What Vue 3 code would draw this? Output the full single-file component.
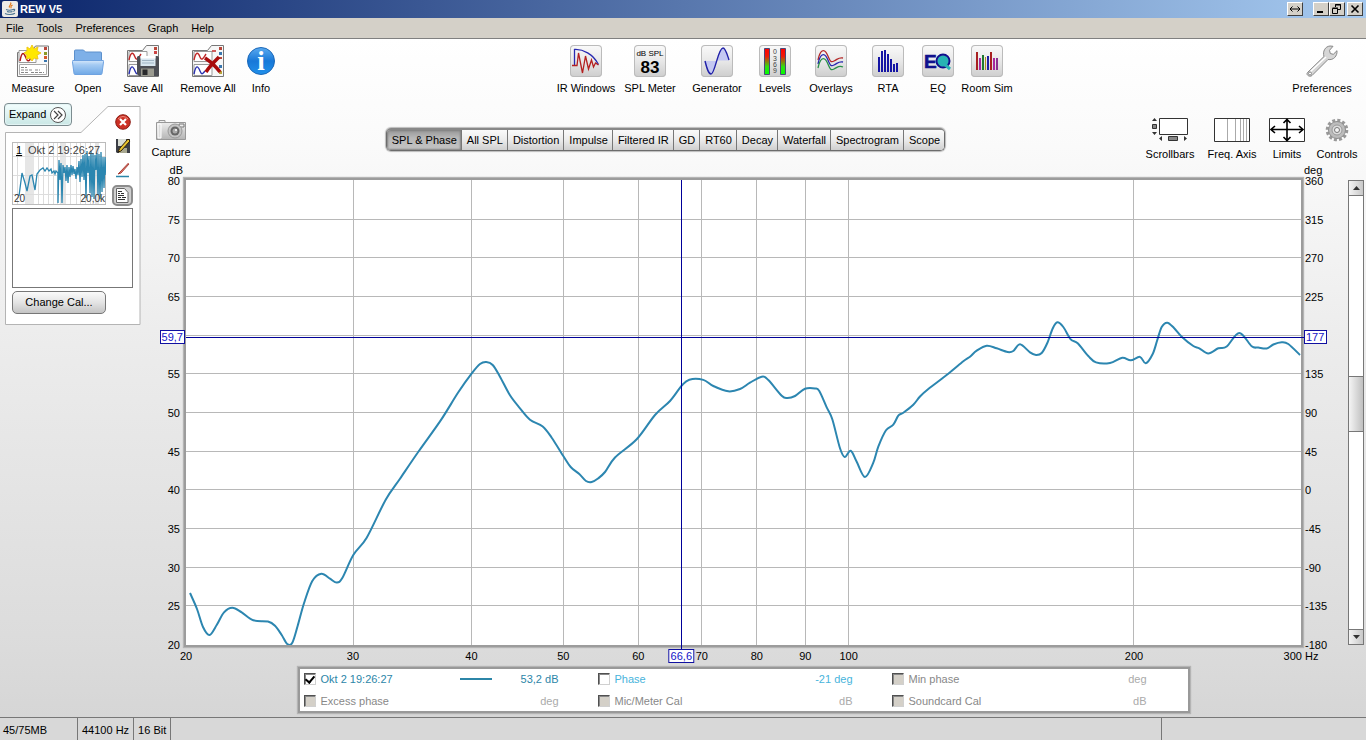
<script setup>
import { ref } from 'vue'

const menus = ['File', 'Tools', 'Preferences', 'Graph', 'Help']
const tabs = ['SPL & Phase', 'All SPL', 'Distortion', 'Impulse', 'Filtered IR', 'GD', 'RT60', 'Decay', 'Waterfall', 'Spectrogram', 'Scope']
const activeTab = ref('SPL & Phase')
const notes = ref('')

const dbTicks = [80, 75, 70, 65, 60, 55, 50, 45, 40, 35, 30, 25, 20]
const degTicks = [360, 315, 270, 225, 180, 135, 90, 45, 0, -45, -90, -135, -180]
const freqTicks = [20, 30, 40, 50, 60, 70, 80, 90, 100, 200, 300]

const plot = { x: 186, y: 180, w: 1115, h: 465 }
const freqShare = (f) => Math.log(f / 20) / Math.log(15)
const dbShare = (d) => (80 - d) / 60
const fx = (f) => plot.x + 0.5 + freqShare(f) * (plot.w - 1)
const dy = (d) => plot.y + 0.5 + dbShare(d) * (plot.h - 1)
const cursor = { freq: 66.6, db: 59.7 }

const response = [
  [190, 593], [197, 609], [203, 627], [209.5, 635], [216.7, 625], [224, 612.3], [232.3, 607.7], [241.7, 612.3],
  [253.3, 620.3], [268, 621.5], [275, 625.7], [281.7, 635], [287.3, 644], [292.3, 642.7], [297.7, 625.7], [304, 603.3],
  [312.3, 581], [321.3, 573.7], [330, 578.7], [336.7, 582.5], [342.3, 578], [353.3, 555], [366.7, 537.7],
  [385.7, 499.7], [400, 478.7], [418.7, 451.3], [440.7, 420.4], [458.3, 392.3], [472.3, 372.7], [480, 364],
  [486.3, 362], [492.7, 365], [500, 376.7], [510, 395.3], [520, 408.3], [530, 419.7], [542.7, 426.5], [551.7, 437.7],
  [563.3, 456], [570.7, 467], [579.3, 474], [586, 481], [591.7, 482], [598, 478.5], [605, 472], [615, 457.5],
  [636.7, 439.3], [655, 415], [670, 401], [681.7, 385.7], [689.3, 379.7], [703.3, 379.9], [713.3, 386],
  [728.3, 391.3], [740, 389], [750, 382.7], [761.7, 376.7], [768.3, 380], [781.7, 395.7], [787.3, 398], [795, 396],
  [805, 388.7], [815, 388.4], [819.3, 391], [826.7, 407.3], [832.3, 419.3], [840, 448.3], [844.7, 457],
  [850.7, 450.7], [856.7, 461.7], [865, 477], [873.3, 462.7], [878.3, 446.7], [886, 430.3], [893.3, 424.7],
  [898.3, 415.7], [903.3, 412.7], [913.3, 404.7], [920, 396.5], [928.3, 389], [948.3, 373.7], [963.3, 361.3],
  [970, 356.7], [976.7, 350.7], [986.7, 345.7], [996.7, 348.3], [1007.7, 352], [1013.3, 351], [1020, 344.3],
  [1030, 352.3], [1036, 355], [1041.7, 353], [1047.3, 343], [1052.7, 328.5], [1057.3, 322.3], [1063.3, 327],
  [1070.7, 339.3], [1077.7, 343.3], [1088.3, 356], [1096, 362.4], [1110, 363], [1122.3, 357.7], [1130.7, 360.3],
  [1140, 356.9], [1145.7, 363.3], [1152.7, 354], [1157.3, 340], [1161.7, 327], [1167.3, 322.7], [1174, 328],
  [1181.7, 336.7], [1193.3, 346], [1199.3, 348.3], [1208.3, 353.5], [1218.3, 348.3], [1226.7, 346.5],
  [1239.3, 333], [1251.7, 346.3], [1258.3, 347.5], [1266.7, 348.5], [1273.3, 344.5], [1281.7, 342.3],
  [1288.3, 344], [1300, 355]
]

function smooth(p) {
  let d = `M${p[0][0]} ${p[0][1]}`
  for (let i = 0; i < p.length - 1; i++) {
    const a = p[i - 1] || p[i]
    const b = p[i]
    const c = p[i + 1]
    const e = p[i + 2] || c
    d += `C${b[0] + (c[0] - a[0]) / 6} ${b[1] + (c[1] - a[1]) / 6} ${c[0] - (e[0] - b[0]) / 6} ${c[1] - (e[1] - b[1]) / 6} ${c[0]} ${c[1]}`
  }
  return d
}
const curve = smooth(response)

const traces = ref([
  { id: 'spl', name: 'Okt 2 19:26:27', value: '53,2 dB', on: true, enabled: true, line: true, tone: 'teal' },
  { id: 'phase', name: 'Phase', value: '-21 deg', on: false, enabled: true, line: false, tone: 'sky' },
  { id: 'min', name: 'Min phase', value: 'deg', on: false, enabled: false, line: false, tone: 'off' },
  { id: 'excess', name: 'Excess phase', value: 'deg', on: false, enabled: false, line: false, tone: 'off' },
  { id: 'mic', name: 'Mic/Meter Cal', value: 'dB', on: false, enabled: false, line: false, tone: 'off' },
  { id: 'card', name: 'Soundcard Cal', value: 'dB', on: false, enabled: false, line: false, tone: 'off' }
])
</script>

<template>
  <div class="app">
    <header class="titlebar">
      <svg class="java" width="16" height="16" viewBox="0 0 16 16">
        <rect width="16" height="16" rx="2" fill="#eceae6" />
        <path d="M8.500 1.500c2 2-2.500 3-1 5.200M10.500 4c-2 1.200-2 1.800-1.200 3.200" fill="none" stroke="#e07a1c" stroke-width="1.200" />
        <path d="M4 8.500c2 .8 5 .8 7 0M5 10.500c2 .7 3.500.7 5.500 0M3 12.500c2.500 1.300 7.500 1.300 10-.3M11 8.500c2-.7 2.500 1 .3 2" fill="none" stroke="#4a7492" stroke-width="1.100" />
      </svg>
      <span class="title">REW V5</span>
      <button class="win" aria-label="Move"><svg width="12" height="10" viewBox="0 0 12 10"><path d="M1 5h10M3.500 2.500 1 5l2.500 2.500M8.500 2.500 11 5 8.500 7.500" fill="none" stroke="#000" /></svg></button>
      <span class="wins">
        <button class="win" aria-label="Minimize"><svg width="10" height="10" viewBox="0 0 10 10"><path d="M1 8h6" stroke="#000" stroke-width="2" /></svg></button>
        <button class="win" aria-label="Restore"><svg width="10" height="10" viewBox="0 0 10 10"><path d="M3.500 3V.5h5v5H6M3 1h6M.5 4.500h5v5h-5zM.5 4h5.500" fill="none" stroke="#000" /></svg></button>
      </span>
      <button class="win" aria-label="Close"><svg width="10" height="10" viewBox="0 0 10 10"><path d="m1.500 1.500 7 7m0-7-7 7" stroke="#000" stroke-width="1.600" /></svg></button>
    </header>

    <nav class="menubar">
      <button v-for="m in menus" :key="m">{{ m }}</button>
    </nav>

    <div class="content">
      <div class="toolbar">
        <div class="group files">
          <button class="tool">
            <svg width="32" height="32" viewBox="0 0 32 32">
              <path d="M.5 7.500h13l5-6.500h13v30.500H.5z" fill="#fafafa" stroke="#777" />
              <path d="M2 5.500h17v12H2z" fill="#fff" stroke="#999" />
              <path d="M3 16c2-11 4-8 6-3s4 3 6-3 2-1 4 0" fill="none" stroke="#b01818" stroke-width="1.500" />
              <path d="m10 2 3 2 2-4 2 4 4-2-1 4 4 2-4 2 1 4-4-1-2 3-2-3-4 1 1-4-3-2 3-2z" fill="#ffe800" stroke="#f0c818" />
              <path d="M27 2h3v3h-3z" fill="#b8473a" /><path d="M27 7h3v3h-3z" fill="#8b9a25" /><path d="M27 11h3v3h-3z" fill="#d45a2a" /><path d="M27 15h3v2h-3z" fill="#3976ae" />
              <path d="M2.500 19.500h27v10h-27z" fill="#fff" stroke="#aaa" />
              <path d="M4 22.500h6M4 25h12m2 0h5M4 27.500h8m2 0h13" stroke="#888" stroke-dasharray="3 1" />
            </svg>
            <span>Measure</span>
          </button>
          <button class="tool">
            <svg width="32" height="32" viewBox="0 0 32 32">
              <defs><linearGradient id="folder" x2="0" y2="1"><stop stop-color="#d4e6fa" /><stop offset=".3" stop-color="#a5cbf3" /><stop offset="1" stop-color="#6fa8e6" /></linearGradient></defs>
              <path d="M2.500 17V6q0-1 1-1h8l2 2h15q1 0 1 1v9z" fill="#7eb0e8" stroke="#5c90cc" />
              <path d="M.8 15.500h30.400q.5 0 .4.800L30 28.500q-.2 1-1 1H3q-.8 0-1-1L.4 16.500q0-1 .4-1z" fill="url(#folder)" stroke="#6ea2e0" />
            </svg>
            <span>Open</span>
          </button>
          <button class="tool">
            <svg width="32" height="32" viewBox="0 0 32 32">
              <path d="M.5 5.500h15l4-5h12v31H.5z" fill="#f7f7f7" stroke="#777" />
              <path d="M2 6.500h18v10H2zM2 19.500h18v11H2z" fill="#fff" stroke="#999" />
              <path d="M2 15c2-9 4-8 6-3s4 0 6-3" fill="none" stroke="#c02828" stroke-width="1.400" />
              <path d="M2 29c2-10 4-8 6-3s3 2 5 0" fill="none" stroke="#2830b0" stroke-width="1.400" />
              <path d="M27 2h3v3h-3z" fill="#b8473a" /><path d="M27 6h3v3h-3z" fill="#c44" />
              <path d="M11 11h19.500l1.500 1.500V31H12l-2-2V12z" fill="#4c4e55" />
              <path d="M13.500 11h15v10h-15z" fill="#d8e6f0" /><path d="M13.500 11h15v2.500h-15z" fill="#fff" /><path d="M15 15.500h12M15 18h12" stroke="#a0b4c4" />
              <path d="M14 23.500h13V31H14z" fill="#9a9a90" /><path d="M15.500 24.500h5V30h-5z" fill="#28292c" />
            </svg>
            <span>Save All</span>
          </button>
          <button class="tool">
            <svg width="32" height="32" viewBox="0 0 32 32">
              <path d="M.5 5.500h15l4-5h12v31H.5z" fill="#f7f7f7" stroke="#777" />
              <path d="M2 6.500h18v10H2zM2 19.500h18v11H2z" fill="#fff" stroke="#999" />
              <path d="M2 15c2-9 4-8 6-3s4 0 6-3M20 6h4" fill="none" stroke="#c02828" stroke-width="1.400" />
              <path d="M2 29c2-10 4-8 6-3s3 2 5 0" fill="none" stroke="#2830b0" stroke-width="1.400" />
              <path d="M27 2h3v3h-3zM27 12h3v2h-3z" fill="#b8473a" /><path d="M27 7h3v3h-3zM27 20h3v3h-3z" fill="#3976ae" /><path d="M27 26h3v3h-3z" fill="#b8a43a" />
              <path d="M13 13c6 4 12 10 15 14M27 12c-5 5-10 10-13 15" fill="none" stroke="#a80c0c" stroke-width="3.500" />
            </svg>
            <span>Remove All</span>
          </button>
          <button class="tool">
            <svg width="28" height="32" viewBox="0 0 28 32">
              <defs><linearGradient id="info" x2="0" y2="1"><stop stop-color="#5aaaf0" /><stop offset=".5" stop-color="#1878d8" /><stop offset="1" stop-color="#2090ea" /></linearGradient></defs>
              <circle cx="14" cy="16" r="13.500" fill="url(#info)" stroke="#1c68b8" />
              <text class="serif" x="14" y="25" text-anchor="middle" font-size="27" font-weight="bold" fill="#fff">i</text>
            </svg>
            <span>Info</span>
          </button>
        </div>

        <div class="group views">
          <button class="tool">
            <svg class="tile" width="32" height="32" viewBox="0 0 32 32">
              <path d="M4.500 21V4.500C13 4 23 9 28.500 19.500" fill="none" stroke="#2828b0" stroke-width="1.300" />
              <path d="M2 20.500h5L8.500 8l4 20 3-17 3 13 3-9 2 7 2-4 3 2" fill="none" stroke="#b42020" stroke-width="1.300" />
            </svg>
            <span>IR Windows</span>
          </button>
          <button class="tool">
            <svg class="tile" width="32" height="32" viewBox="0 0 32 32">
              <text x="16" y="11" text-anchor="middle" font-size="8">dB SPL</text>
              <text x="16" y="28" text-anchor="middle" font-size="17" font-weight="bold">83</text>
            </svg>
            <span>SPL Meter</span>
          </button>
          <button class="tool">
            <svg class="tile" width="32" height="32" viewBox="0 0 32 32">
              <path d="M4 16h12c-3 9-4 13-6.500 13S6 23 4 16zM16 15.500c2-8 3-12 5.500-12S26 10 28 15.500z" fill="#c4c8f2" />
              <path d="M4 16c2 8 3.500 13 6 13C14 29 17 3 22 3c2.500 0 4 6 6 12" fill="none" stroke="#2020a8" stroke-width="1.400" />
            </svg>
            <span>Generator</span>
          </button>
          <button class="tool">
            <svg class="tile" width="32" height="32" viewBox="0 0 32 32">
              <defs><linearGradient id="level" x2="0" y2="1"><stop stop-color="#f00" /><stop offset=".3" stop-color="#f01808" /><stop offset=".7" stop-color="#30e010" /><stop offset="1" stop-color="#0f0" /></linearGradient></defs>
              <path d="M5.500 3.500h5v26h-5zM21.500 3.500h5v26h-5z" fill="url(#level)" stroke="#484878" />
              <g font-size="7" text-anchor="middle" fill="#444"><text x="16" y="9">0</text><text x="16" y="16">3</text><text x="16" y="22">6</text><text x="16" y="28">9</text></g>
            </svg>
            <span>Levels</span>
          </button>
          <button class="tool">
            <svg class="tile" width="32" height="32" viewBox="0 0 32 32">
              <g fill="none" stroke-width="1.300">
                <path d="M3 15C5 5 9 3 12 9s3 9 7 7 5-4 9-3" stroke="#b42828" />
                <path d="M3 19C5 9 9 7 12 13s3 9 7 7 5-4 9-3" stroke="#2828b0" />
                <path d="M3 23c2-10 6-12 9-6s3 9 7 7 5-4 9-2" stroke="#289048" />
              </g>
            </svg>
            <span>Overlays</span>
          </button>
          <button class="tool">
            <svg class="tile" width="32" height="32" viewBox="0 0 32 32">
              <path d="M6 12h2v15H6zM9 6h2v21H9zM12 5h2v22h-2zM15 9h2v18h-2zM18 14h2v13h-2zM21 19h2v8h-2zM24 18h2v9h-2z" fill="#1414a4" />
            </svg>
            <span>RTA</span>
          </button>
          <button class="tool">
            <svg class="tile" width="32" height="32" viewBox="0 0 32 32">
              <circle cx="21" cy="16" r="6" fill="#28b4b4" />
              <text x="2" y="23" font-size="19" font-weight="bold" fill="#10108c" stroke="#10108c" stroke-width=".6">E</text>
              <circle cx="21" cy="16" r="6.500" fill="none" stroke="#10108c" stroke-width="2" />
              <path d="m21 18 7 6" stroke="#28b4b4" stroke-width="3" />
            </svg>
            <span>EQ</span>
          </button>
          <button class="tool">
            <svg class="tile" width="32" height="32" viewBox="0 0 32 32">
              <path d="M5 7h2v18H5zM19 7h2v18h-2z" fill="#a82020" /><path d="M8 13h2v12H8zM22 13h2v12h-2z" fill="#a828a0" />
              <path d="M11 10h2v15h-2z" fill="#207830" /><path d="M14 12h1v13h-1z" fill="#b09020" /><path d="M16 11h2v14h-2z" fill="#2020a0" /><path d="M25 13h2v12h-2z" fill="#8c3090" />
            </svg>
            <span>Room Sim</span>
          </button>
        </div>

        <div class="group prefs">
          <button class="tool">
            <svg width="32" height="32" viewBox="0 0 32 32">
              <path d="M1.500 27.500 18 11.500C16.500 6.500 19 1.500 24 1l3 .3-3.500 4 .8 3.200 3 .8 3.700-3.600C31.500 11 27.500 15.500 22 14.500L6 30.500c-2 2-6.500-.5-4.500-3z" fill="#d6d6d6" stroke="#888" />
              <path d="M4.500 26.500 20 12" stroke="#fff" stroke-width="1.500" />
              <circle cx="4" cy="28.500" r="1.500" fill="#fff" stroke="#888" />
            </svg>
            <span>Preferences</span>
          </button>
        </div>
      </div>

      <div class="body">
        <aside class="side">
          <svg class="card" viewBox="0 0 136 219">
            <path d="M.5 218.500V26.500H76L103 .5h32v218z" fill="#fff" stroke="#b4b4b4" />
          </svg>
          <button class="expand">Expand
            <svg width="18" height="18" viewBox="0 0 18 18"><circle cx="9" cy="9" r="7.500" fill="#fff" stroke="#555" /><path d="m5 5 4 4-4 4m4-8 4 4-4 4" fill="none" stroke="#444" stroke-width="1.200" /></svg>
          </button>
          <div class="sheet">
            <svg class="thumb" viewBox="0 0 94 63" role="img" aria-label="Measurement 1, Okt 2 19:26:27">
              <rect x=".5" y=".5" width="93" height="62" fill="#fff" stroke="#bbb" />
              <path d="M13 1h9v61h-9zM48 1h6v61h-6zM83 1h4v61h-4z" fill="#e6e6e6" />
              <path d="M1 14.500h92M1 33.500h92M1 52.500h92M5.500 1v61M26.500 1v61M31.500 1v61M36.500 1v61M41.500 1v61M45.500 1v61M58.500 1v61M64.500 1v61M68.500 1v61M73.500 1v61M78.500 1v61" stroke="#ddd" />
              <path d="M7 54l3-23 3 10 2 8 3-15 2-1 3 15 2-16 3-4 3-2 2 3 2-3 2 3 2-2 1 4 2-2 1 3 1-3 2 2V61l1-43 1 20 1-17 1 40 1-38 1 8 1-6 1 14 1-16 1 18 1-16 1 10 1-12 1 10 1-9 1 8 1-5 1 10 1-12 1 8 1-14 1 21 1-23 1 18 1-22 1 25 1-26 1 44 1-47 1 22 1-17 1 37 1-42 1 46 1-44 1 46 1-44 1 15 1-17 1 42 1-41 1 45 1-47 1 40 1-35 1 31 1-31 1 18 1-10 1 26 1-27 1 18 1-12 1 22 1 10" fill="none" stroke="#2b86b0" stroke-width="1.300" />
              <text x="4" y="12" font-size="11" text-decoration="underline">1</text>
              <text x="16" y="12" font-size="11" fill="#444">Okt 2 19:26:27</text>
              <text x="2" y="60" font-size="10" fill="#333">20</text>
              <text x="93" y="60" font-size="10" fill="#333" text-anchor="end">20,0k</text>
            </svg>
            <textarea v-model="notes" aria-label="Notes"></textarea>
            <button class="cal">Change Cal...</button>
          </div>
          <div class="actions">
            <button aria-label="Remove measurement"><svg width="16" height="16" viewBox="0 0 16 16"><circle cx="8" cy="8" r="7.300" fill="#cc3024" stroke="#8c1c14" /><path d="M3 5q5-5 10 0" stroke="#ec8c80" fill="none" /><path d="m5 5 6 6m0-6-6 6" stroke="#fff" stroke-width="2.200" /></svg></button>
            <button aria-label="Save measurement"><svg width="16" height="16" viewBox="0 0 16 16"><path d="M1 1h14v14H2l-1-1z" fill="#3c3f46" /><path d="M3 1h8v7H3z" fill="#d8dcd4" /><path d="M4 10h8v5H4z" fill="#a8a890" /><path d="M13 1 5 10l-2 4 3-1 9-10z" fill="#e8c430" stroke="#302008" /></svg></button>
            <button aria-label="Trace colour"><svg width="16" height="16" viewBox="0 0 16 16"><path d="M13.500 1 5 10l-2 2 3-1 8-9" fill="#e88070" stroke="#a84038" /><path d="M1 14.500h13" stroke="#2b86a8" stroke-width="1.500" /></svg></button>
            <button class="notes" aria-label="Show notes"><svg width="13" height="15" viewBox="0 0 13 15"><path d="M.5.5h8l3.500 4v10H.5z" fill="#fff" stroke="#666" /><path d="M2 3.500h4M2 5.500h2m1 0h3M2 7.500h6M2 9.500h3m1 0h4M2 11.500h7" stroke="#333" /></svg></button>
          </div>
        </aside>

        <main class="main">
          <div class="viewbar">
            <button class="tool capture">
              <svg width="30" height="22" viewBox="0 0 30 22">
                <defs><linearGradient id="cam" x2="0" y2="1"><stop stop-color="#f4f4f4" /><stop offset="1" stop-color="#b4b4b4" /></linearGradient></defs>
                <path d="M3 3V1.500h6V3M.5 3.500h29v17H.5z" fill="url(#cam)" stroke="#999" />
                <path d="M2 5h3v14H2z" fill="#ddd" stroke="#fff" /><path d="M23 5h5v3h-5z" fill="#eee" stroke="#777" />
                <circle cx="19" cy="12" r="7" fill="#c4c4c4" stroke="#999" /><circle cx="19" cy="12" r="4.500" fill="#666" /><circle cx="19" cy="12" r="2.500" fill="#aaa" /><circle cx="20" cy="11" r="1" fill="#fff" />
              </svg>
              <span>Capture</span>
            </button>
            <div class="tabs" role="tablist">
              <button v-for="t in tabs" :key="t" role="tab" :aria-selected="t === activeTab" :class="{ on: t === activeTab }" @click="activeTab = t">{{ t }}</button>
            </div>
            <div class="group axes">
              <button class="tool">
                <svg width="38" height="26" viewBox="0 0 38 26">
                  <path d="M8.500 1.500h28v16h-28z" fill="#fff" stroke="#333" /><path d="M1.500 7.500h4v4h-4zM17.500 19.500h9v4h-9z" fill="#888" stroke="#333" />
                  <path d="M1 4h5L3.500 1zM1 15h5l-2.500 3zM11 19v5l-3-2.500zM33 19v5l3-2.500z" fill="#333" />
                </svg>
                <span>Scrollbars</span>
              </button>
              <button class="tool">
                <svg width="38" height="26" viewBox="0 0 38 26"><path d="M1.500 1.500h35v23h-35z" fill="#fff" stroke="#333" /><path d="M14.500 2v22M22.500 2v22M27.500 2v22M30.500 2v22M33.500 2v22" stroke="#aaa" /></svg>
                <span>Freq. Axis</span>
              </button>
              <button class="tool">
                <svg width="38" height="26" viewBox="0 0 38 26"><path d="M1.500 1.500h35v23h-35z" fill="#fff" stroke="#333" /><path d="M3 12.500h32M19 3v20M7 9l-4 3.500L7 16M31 9l4 3.500-4 3.500M15.500 6 19 2.500 22.500 6M15.500 20l3.500 3.500 3.500-3.500" fill="none" stroke="#000" stroke-width="1.600" /></svg>
                <span>Limits</span>
              </button>
              <button class="tool">
                <svg width="26" height="26" viewBox="0 0 26 26">
                  <circle cx="13" cy="13" r="9.800" fill="none" stroke="#999" stroke-width="3" stroke-dasharray="3 2.130" />
                  <circle cx="13" cy="13" r="8.500" fill="#bcbcbc" stroke="#8c8c8c" /><circle cx="13" cy="13" r="5" fill="#ddd" stroke="#999" /><circle cx="13" cy="13" r="2.500" fill="#f4f4f4" stroke="#777" />
                </svg>
                <span>Controls</span>
              </button>
            </div>
          </div>

          <div class="chart">
            <span class="unit left">dB</span>
            <span class="unit right">deg</span>
            <div class="yaxis left">
              <span v-for="d in dbTicks" :key="d" :class="{ hidden: d === 60 }">{{ d }}</span>
            </div>
            <div class="plot">
              <svg class="canvas" viewBox="186 180 1115 465" preserveAspectRatio="none" role="img" aria-label="SPL against frequency">
                <g class="grid">
                  <line v-for="d in dbTicks.slice(1, -1)" :key="d" x1="186" x2="1301" :y1="dy(d)" :y2="dy(d)" />
                  <line v-for="f in freqTicks.slice(1, -1)" :key="f" y1="180" y2="645" :x1="fx(f)" :x2="fx(f)" />
                </g>
                <path class="curve" :d="curve" />
              </svg>
              <i class="cross horizontal" :style="{ top: dbShare(cursor.db) * 100 + '%' }"></i>
              <i class="cross vertical" :style="{ left: freqShare(cursor.freq) * 100 + '%' }"></i>
              <b class="flag db" :style="{ top: dbShare(cursor.db) * 100 + '%' }">59,7</b>
              <b class="flag deg" :style="{ top: dbShare(cursor.db) * 100 + '%' }">177</b>
              <b class="flag hz" :style="{ left: freqShare(cursor.freq) * 100 + '%' }">66,6</b>
            </div>
            <div class="yaxis right">
              <span v-for="d in degTicks" :key="d" :class="{ hidden: d === 180 }">{{ d }}</span>
            </div>
            <div class="scroll" role="scrollbar" aria-label="Vertical range" aria-controls="freq-axis" aria-valuenow="48">
              <button aria-label="Scroll up"><svg width="7" height="4" viewBox="0 0 7 4"><path d="M0 4h7L3.500 0z" fill="#333" /></svg></button>
              <span class="track above"></span>
              <span class="handle"></span>
              <span class="track below"></span>
              <button aria-label="Scroll down"><svg width="7" height="4" viewBox="0 0 7 4"><path d="M0 0h7L3.500 4z" fill="#333" /></svg></button>
            </div>
            <div id="freq-axis" class="xaxis">
              <span v-for="f in freqTicks" :key="f" :style="{ left: freqShare(f) * 100 + '%' }">{{ f }}{{ f === 300 ? ' Hz' : '' }}</span>
            </div>
            <div class="legend">
              <div v-for="t in traces" :key="t.id" class="trace" :class="t.tone">
                <input :id="t.id" v-model="t.on" type="checkbox" :disabled="!t.enabled" />
                <label :for="t.id">{{ t.name }}</label>
                <i v-if="t.line" class="sample"></i>
                <span class="value">{{ t.value }}</span>
              </div>
            </div>
          </div>
        </main>
      </div>
    </div>

    <footer class="status">
      <span class="memory">45/75MB</span>
      <span class="rate">44100 Hz</span>
      <span class="bits">16 Bit</span>
      <span class="message"></span>
    </footer>
  </div>
</template>

<style>
body { margin: 0; }
</style>

<style scoped>
* { box-sizing: border-box; }
.app { min-height: 100vh; display: flex; flex-direction: column; font: 11px/13px "Liberation Sans", Arial, sans-serif; color: #000; background: #d8d8d8; }
button { font: inherit; color: inherit; margin: 0; padding: 0; border: 0; background: none; white-space: nowrap; }
svg { display: block; }
.serif { font-family: "Liberation Serif", "Times New Roman", serif; }

.titlebar { height: 18px; display: flex; align-items: center; padding: 0 3px 0 2px; background: linear-gradient(90deg, #0a246a, #a6caf0); }
.title { flex: 1; margin-left: 2px; color: #fff; font-weight: bold; }
.win { width: 16px; height: 14px; display: grid; place-items: center; background: #d4d0c8; border: 1px solid; border-color: #fff #404040 #404040 #fff; }
.wins { display: flex; margin: 0 2px 0 10px; }

.menubar { height: 21px; display: flex; align-items: center; gap: 13px; padding: 0 6px; background: #d4d0c8; border-bottom: 1px solid #808080; }

.content { flex: 1; display: flex; flex-direction: column; background: linear-gradient(#fff, #fafafa 16%, #ececec 45%, #dcdcdc 88%, #d6d6d6); }
.toolbar { display: flex; justify-content: space-between; padding: 6px 12px 0 6px; height: 57px; }
.group { display: flex; }
.tool { display: flex; flex-direction: column; align-items: center; gap: 5px; }
.tool span { white-space: nowrap; }
.files .tool { width: 54px; }
.files .tool:nth-child(2) { width: 56px; }
.files .tool:nth-child(4) { width: 76px; }
.files .tool:nth-child(5) { width: 30px; }
.views .tool { width: 50px; }
.views .tool:nth-child(1) { width: 62px; }
.views .tool:nth-child(2) { width: 66px; }
.views .tool:nth-child(3) { width: 68px; }
.views .tool:nth-child(4), .views .tool:nth-child(8) { width: 48px; }
.views .tool:nth-child(5) { width: 64px; }
.prefs .tool { width: 64px; }
.tile { border-radius: 4px; background: linear-gradient(#fafafa, #e8e8e8 50%, #cdcdcd); box-shadow: inset 0 0 0 1px #bbb; }

.body { flex: 1; display: flex; }
.side { position: relative; width: 145px; flex: none; display: grid; grid-template-columns: 121px 0; grid-template-rows: auto 1fr; padding: 7px 0 0 12px; }
.card { position: absolute; left: 5px; top: 10px; width: 136px; }
.expand { position: relative; grid-row: 1; justify-self: start; margin-left: -8px; width: 68px; height: 23px; display: flex; align-items: center; justify-content: space-between; padding: 0 4px; border: 1px solid #7c8c90; border-radius: 4px; background: linear-gradient(#f4ffff, #c8e6e4); box-shadow: inset 0 0 1px 1px #e4f4f4; }
.sheet { position: relative; grid-row: 2; grid-column: 1; padding-top: 16px; display: flex; flex-direction: column; align-items: flex-start; }
.thumb { width: 94px; height: 63px; }
textarea { display: block; width: 100%; height: 80px; margin: 3px 0; border: 1px solid #777; background: #fff; resize: none; font: inherit; }
.cal { width: 94px; height: 23px; border: 1px solid #777; border-radius: 5px; background: linear-gradient(#fafafa, #e4e4e4 50%, #c4c4c4); }
.actions { position: relative; grid-column: 2; grid-row: 1 / 3; justify-self: end; width: 21px; padding-top: 11px; display: flex; flex-direction: column; align-items: center; gap: 8px; }
.notes { width: 21px; height: 21px; margin-top: -1px; display: grid; place-items: center; border: 2px solid #8c8c8c; border-radius: 5px; background: #d0d0d0; }

.main { flex: 1; min-width: 0; display: flex; flex-direction: column; }
.viewbar { height: 68px; flex: none; display: flex; justify-content: space-between; align-items: flex-start; padding: 21px 1px 0 7px; }
.capture { padding-top: 2px; width: 38px; }
.tabs { display: flex; height: 23px; margin-top: 11px; border: 1px solid #6c6c6c; border-top: 2px solid #888; border-radius: 5px; overflow: hidden; box-shadow: 0 0 1px 1px #bbb; }
.tabs button { padding: 0 4px 0 5px; border-right: 1px solid #777; background: linear-gradient(#fafafa, #ebebeb 50%, #cfcfcf); }
.tabs button:last-child { border-right: 0; }
.tabs .on { background: linear-gradient(#989898, #b8b8b8 40%, #c4c4c4); box-shadow: inset 0 0 2px 1px #808080; }
.axes .tool { width: 58px; }
.axes .tool:nth-child(2) { width: 66px; }
.axes .tool:nth-child(3) { width: 44px; }
.axes .tool:nth-child(4) { width: 56px; }

.chart { flex: 1; display: grid; grid-template-columns: 41px minmax(0, 1fr) 47px 18px; grid-template-rows: 16px minmax(300px, 1fr) 22px 46px; padding-bottom: 4px; }
.unit.left { grid-area: 1 / 1; text-align: right; padding-right: 3px; }
.unit.right { grid-area: 1 / 3; padding-left: 3px; }
.yaxis { grid-row: 2; display: flex; flex-direction: column; justify-content: space-between; margin: -5px 0 -7px; }
.yaxis.left { grid-column: 1; text-align: right; padding-right: 6px; }
.yaxis.right { grid-column: 3; padding-left: 4px; }
.hidden { visibility: hidden; }
.plot { grid-area: 2 / 2; position: relative; background: #fff; box-shadow: 0 0 0 2px #9c9c9c, 0 0 1px 3px #b4b4b4; }
.canvas { position: absolute; inset: 0; width: 100%; height: 100%; }
.grid line { stroke: #b8b8b8; stroke-width: 1px; vector-effect: non-scaling-stroke; shape-rendering: crispEdges; }
.curve { fill: none; stroke: #2c86b0; stroke-width: 2px; vector-effect: non-scaling-stroke; }
.cross { position: absolute; background: #000098; }
.cross.horizontal { left: 0; right: -3px; height: 1px; }
.cross.vertical { top: 0; bottom: -4px; width: 1px; }
.flag { position: absolute; height: 14px; padding: 0 1px; border: 1px solid #1010a0; background: #fff; color: #1414c8; font-weight: normal; line-height: 12px; }
.flag.db { right: 100%; margin-right: 1px; transform: translateY(-50%); }
.flag.deg { left: 100%; margin-left: 3px; padding: 0 2px 0 1px; transform: translateY(-50%); }
.flag.hz { top: 100%; margin-top: 4px; transform: translateX(-50%); z-index: 1; }
.scroll { grid-area: 2 / 4; width: 16px; display: flex; flex-direction: column; border: 1px solid #777; background: #fff; }
.scroll button { height: 15px; flex: none; display: grid; place-items: center; background: linear-gradient(90deg, #f4f4f4, #c8c8c8); border-bottom: 1px solid #777; }
.scroll button:last-child { border-bottom: 0; border-top: 1px solid #777; }
.above { flex: 181; }
.handle { flex: 54; border: solid #777; border-width: 1px 0; background: linear-gradient(90deg, #f4f4f4, #c0c0c0); }
.below { flex: 198; }
.xaxis { grid-area: 3 / 2; position: relative; }
.xaxis span { position: absolute; top: 5px; transform: translateX(-50%); white-space: nowrap; }

.legend { grid-area: 4 / 2; justify-self: center; width: 80%; display: grid; grid-template-columns: repeat(3, 1fr); row-gap: 2px; padding: 0 2px 0 4px; border: 2px solid #999; background: #fff; box-shadow: 0 0 1px 1px #b4b4b4; }
.trace { display: flex; align-items: center; padding-right: 39px; }
.trace input { appearance: none; width: 12px; height: 12px; margin: 0 5px 0 0; border: 1px solid; border-color: #505050 #d0d0d0 #d0d0d0 #505050; background: #fff; box-shadow: inset 1px 1px #888; display: grid; place-items: center; }
.trace input:checked::after { content: ""; width: 4px; height: 7px; margin-bottom: 2px; border: solid #000; border-width: 0 2px 2px 0; transform: rotate(40deg); }
.trace input:disabled { background: #d4d0c8; }
.sample { width: 32px; height: 2px; margin-left: auto; background: #2c86a8; }
.value { margin-left: auto; text-align: right; }
.sample + .value { width: 67px; margin-left: 0; }
.teal { color: #2c86a8; }
.sky { color: #48b4dc; }
.off { color: #888; }
.off .value { color: #aaa; }

.status { height: 23px; flex: none; display: flex; align-items: stretch; border-top: 1px solid #777; background: #d8d8d8; line-height: 24px; }
.status span { padding: 0 4px; border-right: 1px solid #777; white-space: nowrap; }
.status .memory { width: 78px; padding-left: 3px; }
.status .message { flex: 1; margin-right: 204px; }
</style>
